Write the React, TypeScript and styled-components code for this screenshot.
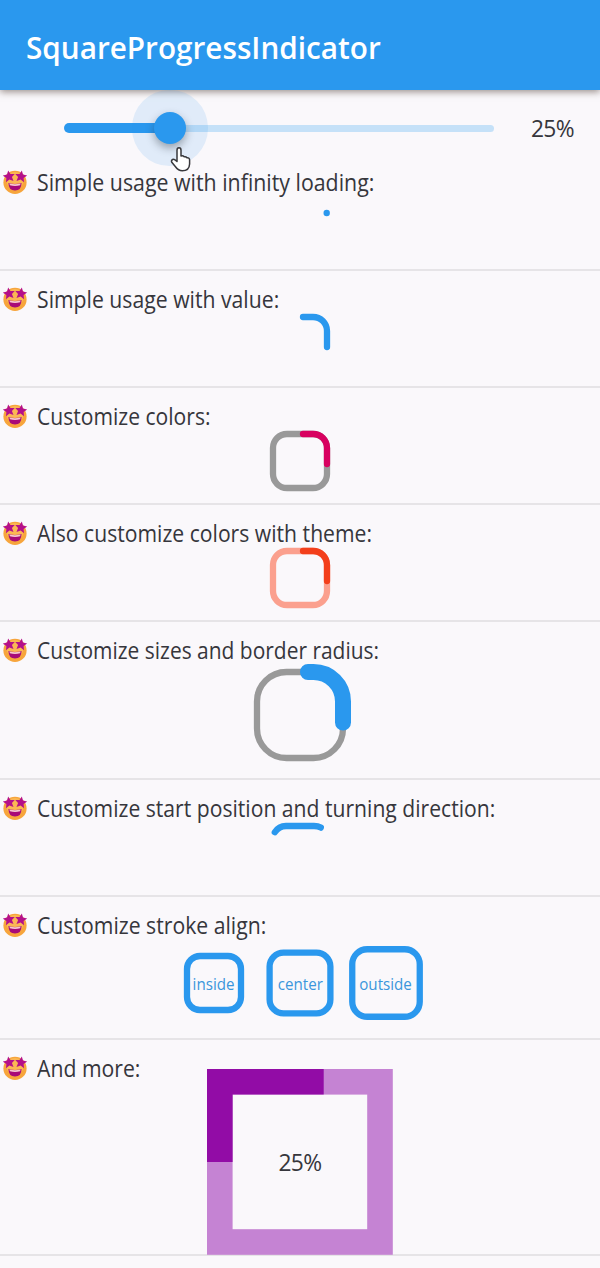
import React from 'react';
import styled, { createGlobalStyle } from 'styled-components';

const GlobalStyle = createGlobalStyle`
  *, *::before, *::after { box-sizing: border-box; }
  body {
    margin: 0;
    background: #faf8fb;
    color: #36363c;
    font-family: 'Open Sans', 'Noto Sans', sans-serif;
  }
`;

const BLUE = '#2a98ee';

const Screen = styled.main`
  display: flex;
  flex-direction: column;
  width: 600px;
  height: 1268px;
  overflow: hidden;
  background: #faf8fb;
`;

const AppBar = styled.header`
  display: flex;
  align-items: center;
  flex: none;
  height: 90px;
  padding: 3px 26px 0 25.5px;
  background: ${BLUE};
  box-shadow: 0 2px 7px rgba(60, 40, 30, 0.5);
`;

const Title = styled.h1`
  margin: 0;
  color: #fff;
  font-size: 31px;
  font-weight: 600;
  line-height: 42px;
  white-space: nowrap;
  transform: scaleX(0.958);
  transform-origin: left;
`;

const SliderRow = styled.div`
  display: flex;
  align-items: center;
  flex: none;
  height: 64px;
  padding: 12px 26px 0 64px;
`;

const Track = styled.div`
  display: flex;
  align-items: center;
  width: 430px;
  height: 10px;
`;

const TrackActive = styled.div`
  width: 106px;
  height: 10px;
  border-radius: 5px 0 0 5px;
  background: ${BLUE};
`;

const TrackRest = styled.div`
  flex: 1;
  height: 7px;
  border-radius: 0 4px 4px 0;
  background: #c5e1f8;
`;

const Thumb = styled.div`
  position: relative;
  z-index: 1;
  width: 32px;
  height: 32px;
  margin: 0 -16px;
  border-radius: 50%;
  background: ${BLUE};
  box-shadow: 0 4px 8px rgba(40, 50, 60, 0.4), 0 0 0 22px rgba(42, 152, 238, 0.12);
`;

const Cursor = styled.svg`
  position: absolute;
  z-index: 2;
  left: 16px;
  top: 34px;
  width: 22px;
  height: 27px;
`;

const Percent = styled.span`
  font-size: 22.8px;
  line-height: 30px;
  letter-spacing: -0.6px;
  white-space: nowrap;
  padding-top: 1px;
`;

const SliderValue = styled(Percent)`
  margin-left: auto;
`;

const Section = styled.section<{ $height: number }>`
  display: grid;
  flex: none;
  grid-template: 1fr / 1fr;
  height: ${({ $height }) => $height}px;
  border-bottom: 2px solid #e6e4e7;
`;

const Label = styled.div`
  grid-area: 1 / 1;
  align-self: start;
  display: flex;
  align-items: center;
  gap: 9px;
  height: 30px;
  margin-top: 13px;
  padding-left: 3px;
`;

const LabelText = styled.h2<{ $scale: number }>`
  margin: 0;
  padding-top: 1px;
  font-size: 22.8px;
  font-weight: 400;
  line-height: 30px;
  white-space: nowrap;
  transform: scaleX(${({ $scale }) => $scale});
  transform-origin: left;
`;

const Figure = styled.div<{ $top: number; $size?: number }>`
  grid-area: 1 / 1;
  display: grid;
  place-items: center;
  justify-self: center;
  align-self: start;
  width: ${({ $size = 60 }) => $size}px;
  height: ${({ $size = 60 }) => $size}px;
  margin-top: ${({ $top }) => $top}px;
  > * { grid-area: 1 / 1; }
`;

const Canvas = styled.svg`
  display: block;
  overflow: visible;
  fill: none;
`;

const AlignRow = styled.div`
  grid-area: 1 / 1;
  display: flex;
  justify-content: center;
  align-self: start;
  gap: 26px;
  margin-top: 56px;
`;

const AlignBox = styled.div`
  display: grid;
  place-items: center;
  width: 60px;
  height: 60px;
  > * { grid-area: 1 / 1; }
`;

const AlignText = styled.span`
  color: #3b96dc;
  font-size: 17px;
  line-height: 22px;
  padding-top: 1px;
  transform: scaleX(0.89);
`;

const star = 'M0-6 1.7-2.1 6-1.7 2.8 1.1 3.8 5.3 0 3.1-3.8 5.3-2.8 1.1-6-1.7-1.7-2.1Z';

const StarEyes = () => (
  <svg width="25" height="25" viewBox="0 0 25 25">
    <circle cx="12" cy="12.4" r="11.6" fill="#f7a53c" />
    <circle cx="12" cy="10.5" r="8.5" fill="#fbb754" />
    <path d={star} transform="translate(6 6.4) rotate(-8)" fill="#b4108a" />
    <path d={star} transform="translate(18 6.4) rotate(8)" fill="#b4108a" />
    <path d="M5.4 13Q12 15 18.6 13Q18.4 20.6 12 20.6Q5.6 20.6 5.4 13Z" fill="#a80a78" />
    <path d="M6.4 13.4Q12 15 17.6 13.4L17.1 15.2Q12 16.6 6.9 15.2Z" fill="#f6c9cf" />
  </svg>
);

const Caption = ({ text, scale = 0.93 }: { text: string; scale?: number }) => (
  <Label>
    <StarEyes />
    <LabelText $scale={scale}>{text}</LabelText>
  </Label>
);

type RingProps = { track?: string; color?: string };

const Ring = ({ track, color = BLUE }: RingProps) => (
  <Canvas width="60" height="60" viewBox="0 0 60 60" strokeWidth="6.3">
    {track && <rect x="3" y="3" width="54" height="54" rx="14" stroke={track} />}
    <path d="M33 3H43A14 14 0 0 1 57 17V33" stroke={color} strokeLinecap="round" />
  </Canvas>
);

const aligned = [
  { name: 'inside', side: 54, radius: 13 },
  { name: 'center', side: 60.8, radius: 14 },
  { name: 'outside', side: 67.5, radius: 15 },
];

export default function App() {
  return (
    <>
      <GlobalStyle />
      <Screen>
        <AppBar>
          <Title>SquareProgressIndicator</Title>
        </AppBar>
        <SliderRow>
          <Track>
            <TrackActive />
            <Thumb>
              <Cursor viewBox="0 0 22 27">
                <path
                  d="M7 15.5V4.2Q7 1.8 9 1.8T11 4.2V10Q13 9.3 14.2 10.8Q16 10.3 17 11.8Q19.6 11.6 19.6 14V18Q19.3 24.8 12.3 24.8Q8.3 24.8 5.7 21L1.8 16.3Q.9 14.5 2.6 13.5Q4 12.8 7 15.5Z"
                  fill="#fff"
                  stroke="#38383c"
                  strokeWidth="1.5"
                  strokeLinejoin="round"
                />
              </Cursor>
            </Thumb>
            <TrackRest />
          </Track>
          <SliderValue>25%</SliderValue>
        </SliderRow>

        <Section $height={117}>
          <Caption text="Simple usage with infinity loading:" scale={0.936} />
          <Figure $top={43}>
            <Canvas width="60" height="60">
              <circle cx="56.7" cy="16" r="3.2" fill={BLUE} />
            </Canvas>
          </Figure>
        </Section>

        <Section $height={117}>
          <Caption text="Simple usage with value:" />
          <Figure $top={43}>
            <Ring />
          </Figure>
        </Section>

        <Section $height={117}>
          <Caption text="Customize colors:" scale={0.925} />
          <Figure $top={43}>
            <Ring track="#999999" color="#d80160" />
          </Figure>
        </Section>

        <Section $height={117}>
          <Caption text="Also customize colors with theme:" scale={0.928} />
          <Figure $top={42.5}>
            <Ring track="#fba08e" color="#f33f1b" />
          </Figure>
        </Section>

        <Section $height={158}>
          <Caption text="Customize sizes and border radius:" scale={0.919} />
          <Figure $top={47} $size={92}>
            <Canvas width="92" height="92">
              <rect x="3" y="3" width="86" height="86" rx="29.5" stroke="#999999" strokeWidth="6.3" />
              <path d="M54 3H59.5A29.5 29.5 0 0 1 89 32.5V53.5" stroke={BLUE} strokeWidth="16" strokeLinecap="round" />
            </Canvas>
          </Figure>
        </Section>

        <Section $height={117}>
          <Caption text="Customize start position and turning direction:" scale={0.927} />
          <Figure $top={43}>
            <Canvas width="60" height="60">
              <path
                d="M4.8 9.2A14 14 0 0 1 16 3H44Q48 3 50.8 4.6"
                stroke={BLUE}
                strokeWidth="6.3"
                strokeLinecap="round"
              />
            </Canvas>
          </Figure>
        </Section>

        <Section $height={143}>
          <Caption text="Customize stroke align:" />
          <AlignRow>
            {aligned.map(({ name, side, radius }) => (
              <AlignBox key={name}>
                <Canvas width="60" height="60">
                  <rect
                    x={30 - side / 2}
                    y={30 - side / 2}
                    width={side}
                    height={side}
                    rx={radius}
                    stroke={BLUE}
                    strokeWidth="6.3"
                  />
                </Canvas>
                <AlignText>{name}</AlignText>
              </AlignBox>
            ))}
          </AlignRow>
        </Section>

        <Section $height={216}>
          <Caption text="And more:" />
          <Figure $top={29} $size={186}>
            <Canvas width="186" height="186" strokeWidth="25.6">
              <rect x="12.8" y="12.8" width="160.2" height="160.2" stroke="#c583d3" />
              <path d="M116.7 12.8H12.8V93" stroke="#920ca6" />
            </Canvas>
            <Percent>25%</Percent>
          </Figure>
        </Section>
      </Screen>
    </>
  );
}
